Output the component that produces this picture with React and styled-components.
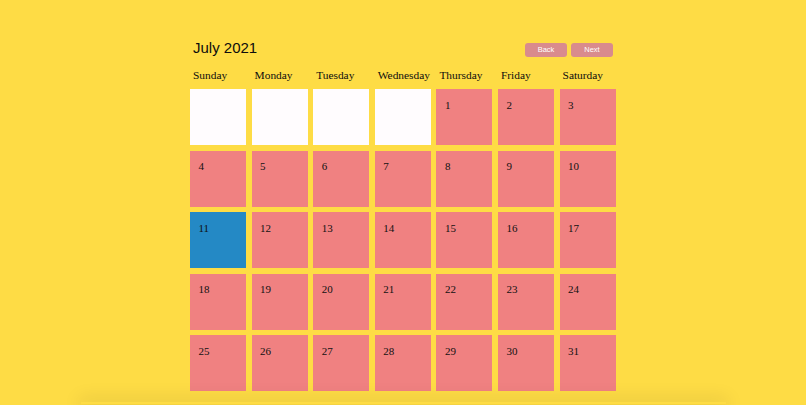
import React from "react";
import styled, { createGlobalStyle } from "styled-components";

const Global = createGlobalStyle`
  html, body {
    margin: 0;
    padding: 0;
    overflow: hidden;
    background: #fedc45;
  }
  body {
    font-family: "Liberation Serif", "Times New Roman", serif;
  }
`;

const Page = styled.div`
  width: 100%;
  height: 405px;
  background: #fedc45;
  display: flex;
  flex-direction: column;
  align-items: center;
  overflow: hidden;
`;

const Calendar = styled.div`
  width: 426px;
  display: flex;
  flex-direction: column;
`;

const Header = styled.div`
  margin-top: 38px;
  height: 20px;
  display: flex;
  justify-content: space-between;
  align-items: center;
  padding: 0 3px;
`;

const Title = styled.h1`
  margin: 0;
  font-family: "Liberation Sans", Arial, sans-serif;
  font-weight: normal;
  font-size: 15px;
  line-height: 16px;
  color: #0d0d0d;
`;

const Nav = styled.div`
  display: flex;
  gap: 4px;
  margin-top: 4px;
`;

const NavButton = styled.button`
  width: 42px;
  height: 14px;
  padding: 0;
  border: none;
  border-radius: 3px;
  background: #d98b8d;
  color: #fff;
  font-family: "Liberation Sans", Arial, sans-serif;
  font-size: 7.5px;
  line-height: 14px;
`;

const Row = styled.div`
  display: grid;
  grid-template-columns: repeat(7, 56px);
  column-gap: 5.6px;
`;

const DayNames = styled(Row)`
  margin-top: 10px;
  height: 14px;
  margin-bottom: 7px;
`;

const DayName = styled.div`
  padding-left: 3px;
  font-size: 11.4px;
  line-height: 14px;
  color: #0d0d0d;
  white-space: nowrap;
`;

const Grid = styled(Row)`
  row-gap: 5.6px;
`;

const Cell = styled.div`
  width: 56px;
  height: 56px;
  box-sizing: border-box;
  padding: 9.5px 0 0 8.5px;
  font-size: 11px;
  line-height: 12px;
  color: #111;
  background: ${(p) =>
    p.$empty ? "#fffcfe" : p.$today ? "#2489c5" : "#f08181"};
`;

const Shelf = styled.div`
  margin-top: 11px;
  width: 645px;
  height: 2px;
  flex-shrink: 0;
  background: #fedc45;
  box-shadow: 0 0 18px 2px rgba(0, 0, 0, 0.16);
`;

const dayNames = [
  "Sunday",
  "Monday",
  "Tuesday",
  "Wednesday",
  "Thursday",
  "Friday",
  "Saturday",
];

export default function App() {
  const cells = [];
  for (let i = 0; i < 4; i++) cells.push(null);
  for (let d = 1; d <= 31; d++) cells.push(d);

  return (
    <Page>
      <Global />
      <Calendar>
        <Header>
          <Title>July 2021</Title>
          <Nav>
            <NavButton>Back</NavButton>
            <NavButton>Next</NavButton>
          </Nav>
        </Header>
        <DayNames>
          {dayNames.map((n) => (
            <DayName key={n}>{n}</DayName>
          ))}
        </DayNames>
        <Grid>
          {cells.map((d, i) =>
            d === null ? (
              <Cell key={"e" + i} $empty />
            ) : (
              <Cell key={d} $today={d === 11}>
                {d}
              </Cell>
            )
          )}
        </Grid>
      </Calendar>
      <Shelf />
    </Page>
  );
}
